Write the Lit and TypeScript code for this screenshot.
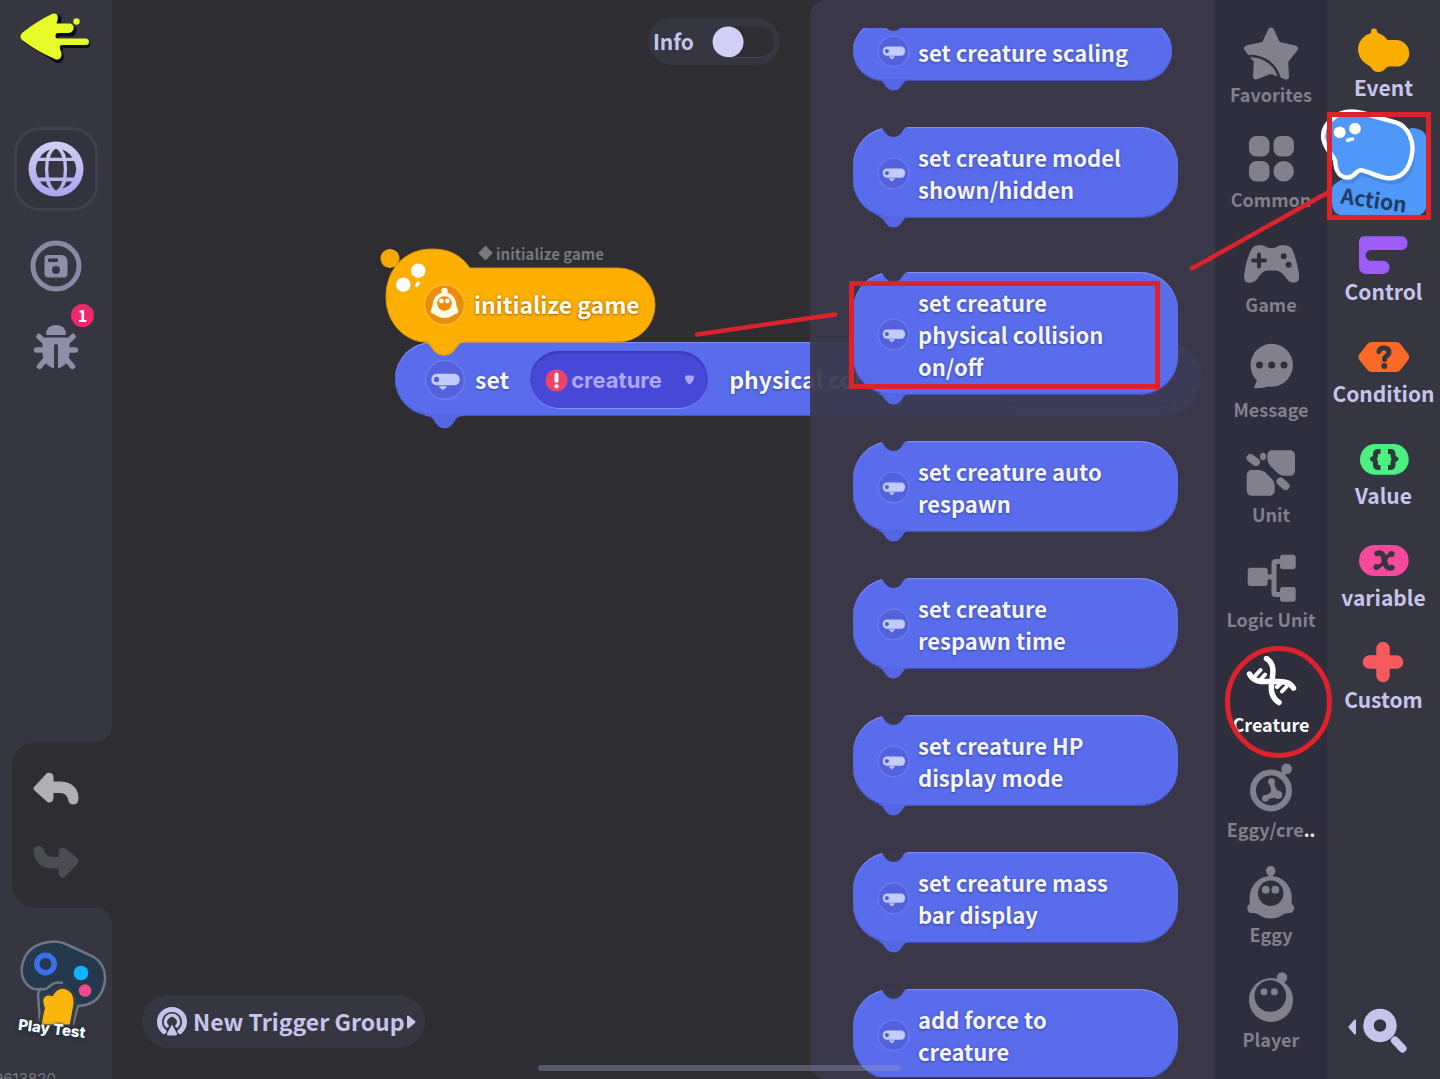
import { LitElement, html, svg, css } from "lit";
import { customElement, state } from "lit/decorators.js";
import { classMap } from "lit/directives/class-map.js";

const capsuleIcon = svg`
  <circle cx="20" cy="20" r="18.500" fill="#5362dc" stroke="#6c7bf0" stroke-width="1.500"/>
  <rect x="7" y="14" width="27" height="11" rx="5" fill="#c4ccff"/>
  <circle cx="12" cy="19.500" r="2.500" fill="#4f5ed0"/>
  <path d="M15 26.500h6l-3 2.500z" fill="#c4ccff" stroke="#c4ccff" stroke-linejoin="round"/>`;

const categories = [
  { label: "Favorites", icon: svg`
    <path d="M28 4.500 L34 17.500 Q35 19 37 19.200 L52 22.500 L43 34 Q42 35.500 42.200 37 L43 50.500 L30 45.500 Q28 45 26 45.500 L13 50.500 L13.800 37 Q14 35.500 13 34 L4 22.500 L19 19.200 Q21 19 22 17.500 Z" fill="currentColor" stroke="currentColor" stroke-width="6" stroke-linejoin="round"/>
    <path d="M6 30 C20 30 33 37 37 54" fill="none" stroke="#2f2e3d" stroke-width="2.500"/>` },
  { label: "Common", icon: svg`<g fill="currentColor">
    <rect x="6" y="5" width="20.500" height="20.500" rx="7.500"/><rect x="30.500" y="5" width="20.500" height="20.500" rx="7.500"/>
    <rect x="6" y="30" width="20.500" height="20.500" rx="7.500"/><circle cx="40.700" cy="40.300" r="10.300"/></g>` },
  { label: "Game", icon: svg`
    <path d="M14 9.500 Q19 8 24 11.200 Q28.500 13 33 11.200 Q38 8 43 9.500 Q48 10 50 15 Q54 25 56.300 39 Q57 46 51 46.800 Q47 47 44 43 Q39 35 33 34.500 H24 Q19 35 14 43 Q11 47 6 46.800 Q0 46 1.200 39 Q3 25 7.500 15 Q9.500 10 14 9.500 Z" fill="currentColor"/>
    <path d="M16 18.500v12 M10 24.500h12" stroke="#2f2e3d" stroke-width="4" stroke-linecap="round"/>
    <circle cx="40.700" cy="20.300" r="3" fill="#2f2e3d"/><circle cx="45.700" cy="28.700" r="3" fill="#2f2e3d"/>` },
  { label: "Message", icon: svg`
    <path d="M28.500 2.700 a21.500 21.500 0 1 1 -3 42.800 Q20 47.500 12.500 47.300 Q10.500 47 11.500 45 L14 39.500 A21.500 21.500 0 0 1 28.500 2.700 Z" fill="currentColor"/>
    <g fill="#2f2e3d"><circle cx="16.500" cy="24" r="3.500"/><circle cx="28.700" cy="24" r="3.500"/><circle cx="41" cy="24" r="3.500"/></g>` },
  { label: "Unit", icon: svg`
    <path d="M29 4.300 H47 a5 5 0 0 1 5 5 V25 a4.700 4.700 0 0 1-4.700 4.700 H41 Q37 29.700 34 26.500 L27 19.500 Q24.300 16.500 24.300 12 V9 a4.700 4.700 0 0 1 4.700-4.700Z M8.700 24 H16 Q20 24 22.500 26.500 L29 33 Q31.700 35.500 31.700 40 V44.700 a5 5 0 0 1-5 5 H8.700 a5 5 0 0 1-5-5 V29 a5 5 0 0 1 5-5Z" fill="currentColor"/>
    <path d="M7.500 12 L13 16 M37.500 35.500 L42.500 40" stroke="currentColor" stroke-width="8" stroke-linecap="round"/>
    <ellipse cx="20" cy="10.500" rx="3" ry="3.700" fill="currentColor"/>` },
  { label: "Logic Unit", icon: svg`
    <g fill="currentColor"><rect x="4.700" y="16.700" width="20" height="18.300" rx="3"/><rect x="37" y="3.700" width="15.700" height="14.500" rx="3"/><rect x="37" y="36" width="15.700" height="14.800" rx="3"/></g>
    <path d="M24 26h7 M38 10.500h-5q-2 0-2 2v29q0 2 2 2h5" fill="none" stroke="currentColor" stroke-width="5"/>` },
  { label: "Creature", icon: svg`<g fill="none" stroke="currentColor" stroke-linecap="round">
    <path d="M23.500 2.500 C32 8 30 17 29 25 C27.500 34 28 41 36 46.500 M6.500 18 C11 27 20 25.500 28 25.500 C37 25.500 46 24 50.500 32" stroke-width="5.500"/>
    <path d="M12 20 L17.500 14 M18 23 L22 18.500 M34 31 L38.500 26.500 M39 35.500 L44.500 29.500" stroke-width="4"/></g>` },
  { label: "Eggy/cre", more: "..", icon: svg`
    <circle cx="28" cy="29.500" r="18" fill="none" stroke="currentColor" stroke-width="6"/>
    <path d="M39 14 L43 9" stroke="currentColor" stroke-width="5"/><circle cx="43.700" cy="7.700" r="5.300" fill="currentColor"/>
    <path d="M28.700 21 Q29 27 34.500 34 Q29 34 22 37" fill="none" stroke="currentColor" stroke-width="5"/>
    <path d="M28.500 22 L34 33.500 L23 37 Q30 31 28.500 22Z" fill="currentColor"/>
    <g fill="currentColor"><circle cx="28.500" cy="20.700" r="3.400"/><circle cx="35" cy="33.800" r="4.200"/><circle cx="22.300" cy="37.300" r="3.400"/></g>` },
  { label: "Eggy", icon: svg`<g fill="currentColor">
    <circle cx="27.700" cy="4.900" r="4.800"/><path d="M25.500 7h4.500v6h-4.500z"/>
    <path d="M27.700 10 A21 21 0 0 1 48.700 31 V38 A4.800 4.800 0 0 1 46 47 Q43 47 41 48 Q28 57 14.500 48 Q12 46.800 9 47 A4.800 4.800 0 0 1 6.700 38 V31 A21 21 0 0 1 27.700 10Z"/></g>
    <circle cx="27.700" cy="27.300" r="12.700" fill="#2f2e3d"/><g fill="currentColor"><circle cx="22.700" cy="23.700" r="3.900"/><circle cx="32.300" cy="23.700" r="3.900"/></g>` },
  { label: "Player", icon: svg`
    <circle cx="28" cy="29" r="22" fill="currentColor"/><circle cx="39" cy="6.500" r="5.200" fill="currentColor"/>
    <circle cx="27.300" cy="25" r="15.800" fill="#2f2e3d"/><g fill="currentColor"><circle cx="21" cy="20.700" r="3.500"/><circle cx="31.300" cy="20.700" r="3.500"/></g>` },
];

const kinds = [
  { label: "Event", icon: svg`
    <path d="M33 5.500 Q33 2.500 36 2.500 Q39 2.500 39 5.500 L40 7 Q46 9 49.500 14 H58 a13.300 13.300 0 0 1 0 26.600 H51 Q48.500 40.800 47 43 Q45 46 40 46 Q35.500 46 33.500 42 Q32.500 40 29 38.500 A17 17 0 0 1 33 7Z" fill="#fbae02"/>` },
  { label: "Action", icon: svg`` },
  { label: "Control", icon: svg`
    <path d="M27 6.300 H64 a7 7 0 0 1 0 13.700 H33 a5.300 5.300 0 0 0 0 10.700 H45 a6.500 6.500 0 0 1 0 13.300 H28 a7 7 0 0 1-7-7 V12 Q21 6.300 27 6.300Z" fill="#9d5cf8"/>` },
  { label: "Condition", icon: svg`
    <path d="M34 10 H58 Q60.500 10 62.500 12 L70 22 Q72.500 25 70 28 L62.500 38 Q60.500 40 58 40 H34 Q31.500 40 29.500 38 L21.500 28 Q19 25 21.500 22 L29.500 12 Q31.500 10 34 10Z" fill="#fb6926"/>
    <path d="M41 19.500 Q41.500 16 46 16 Q51 16 51 20 Q51 22.500 48.500 24 Q46.500 25.300 46.500 27.500" fill="none" stroke="#363640" stroke-width="5" stroke-linecap="round"/><circle cx="46.300" cy="34" r="2.900" fill="#363640"/>` },
  { label: "Value", icon: svg`
    <rect x="22" y="10" width="48.700" height="30.700" rx="15.300" fill="#4df080"/>
    <path d="M42.500 17.500 h-2 q-3 0-3 2.500 v1.500 q0 2.500-3 3.500 q3 1 3 3.500 v2.500 q0 2.500 3 2.500 h2 M50 17.500 h2 q3 0 3 2.500 v1.500 q0 2.500 3 3.500 q-3 1-3 3.500 v2.500 q0 2.500-3 2.500 h-2" fill="none" stroke="#2d3a3a" stroke-width="5" stroke-linejoin="round"/>` },
  { label: "variable", icon: svg`
    <rect x="21" y="9" width="49.700" height="31" rx="15.500" fill="#f5499b"/>
    <path d="M39 17.500 C45 15.500 45.500 20 46.500 25 C47.500 30 49 33 54 31.500" fill="none" stroke="#363640" stroke-width="5.500" stroke-linecap="round"/>
    <path d="M53.500 17.500 C48 18 46 31 38.500 31.500" fill="none" stroke="#363640" stroke-width="3.500" stroke-linecap="round"/>
    <circle cx="53.500" cy="18" r="3" fill="#363640"/><circle cx="38.500" cy="31" r="3" fill="#363640"/>` },
  { label: "Custom", icon: svg`
    <path d="M45 10.500v27M31.500 24h27" stroke="#f65a5f" stroke-width="13.500" stroke-linecap="round"/>` },
];

const actions = [
  { text: "set creature scaling", short: true },
  { text: "set creature model shown/hidden" },
  { text: "set creature physical collision on/off", spaced: true },
  { text: "set creature auto respawn" },
  { text: "set creature respawn time" },
  { text: "set creature HP display mode" },
  { text: "set creature mass bar display" },
  { text: "add force to creature" },
];

@customElement("action-block")
class ActionBlock extends LitElement {
  static properties = { text: {}, short: { type: Boolean, reflect: true } };
  declare text: string;
  declare short: boolean;

  static styles = css`
    :host { display: block; }
    .block {
      position: relative; display: flex; align-items: center; gap: 8px; width: 100%; margin: 0; border: 0;
      padding: 14px 52px 13px 24px; border-radius: 38px; background: #596cec; color: #f4f6ff; text-align: left;
      font: 700 22px/32px "Noto Sans CJK SC", "Noto Sans", sans-serif; cursor: grab;
      box-shadow: inset 0 1px 1px #8590f2, inset 0 -1px 1px #4150b8;
    }
    :host([short]) .block { border-radius: 30px; padding-right: 24px; }
    .icon { flex: none; width: 33px; height: 33px; }
    .label { text-shadow: 0 1px 2px #3c489c, 0 0 2px #4653b0; }
    .notch, .tab { position: absolute; left: 26px; width: 30px; height: 12px; }
    .notch { top: 0; }
    .tab { top: calc(100% - 2px); }
  `;

  render() {
    return html`<button class="block">
      <svg class="notch" viewBox="0 0 30 12"><path d="M0 0 Q3 0 4 2.500 Q8 10 14.500 10 Q21 10 24.500 2.500 Q26 0 29 0Z" fill="#3a384a"/></svg>
      <svg class="icon" viewBox="0 0 40 40">${capsuleIcon}</svg>
      <span class="label">${this.text}</span>
      <svg class="tab" viewBox="0 0 30 12"><path d="M0 0 V1 Q3 1.500 4.500 4 Q8.500 11.500 14.500 11.500 Q20.500 11.500 24.500 4 Q26 1.500 29 1 V0Z" fill="#5466e4"/></svg>
    </button>`;
  }
}

@customElement("app-root")
class AppRoot extends LitElement {
  @state() category = "Creature";
  @state() kind = "Action";

  static styles = css`
    :host { display: block; font-family: "Noto Sans CJK SC", "Noto Sans", sans-serif; font-weight: 700; color: #c6c4ea; }
    * { box-sizing: border-box; }
    button { margin: 0; padding: 0; border: 0; background: none; color: inherit; font: inherit; cursor: pointer; }
    svg { display: block; }
    .page {
      position: relative; display: grid; grid-template-columns: 112px 1fr 405px 112px 113px; grid-template-rows: 100vh;
      background: #2d2d32; overflow: hidden;
    }

    .rail { grid-column: 1; grid-row: 1; display: flex; flex-direction: column; position: relative; z-index: 2; overflow: hidden; }
    .rail-top { flex: 1; display: flex; flex-direction: column; align-items: center; background: #363640; border-bottom-right-radius: 16px; padding-top: 12px; }
    .globe { width: 84px; height: 84px; margin-top: 62px; border: 3px solid #42414d; border-radius: 26px; background: #33333d; display: grid; place-items: center; }
    .save { margin-top: 29px; }
    .bug { position: relative; margin-top: 30px; padding: 0 8px; }
    .badge { position: absolute; top: -18px; right: -7px; width: 23px; height: 23px; border-radius: 50%; background: #f0286e; color: #fff; font-size: 16px; line-height: 22px; text-align: center; }
    .history { background: linear-gradient(to right, #363640 40px, transparent 40px); }
    .history-box { margin-left: 12px; height: 166px; padding: 20px 32px 20px 20px; display: flex; flex-direction: column; align-items: center; justify-content: space-between; background: #2d2d32; border-radius: 24px 0 0 24px; }
    .history-box svg { width: 48px; height: 54px; }
    .rail-bottom { height: 171px; padding-top: 30px; background: #363640; border-top-right-radius: 16px; overflow: hidden; }
    .play { display: flex; flex-direction: column; align-items: flex-start; padding-left: 18px; }
    .play-text { margin-top: -7px; font: 800 15px/20px Inter, sans-serif; color: #fff; transform: rotate(7deg); text-shadow: 0 0 3px #1f3448, 0 1px 4px #1f3448, 1px 2px 2px #1f3448; }
    .uid { display: block; margin: 30px 0 0 -6px; font: 400 15px/20px Inter, sans-serif; color: #77777f; }

    .canvas { grid-column: 2 / 4; grid-row: 1; position: relative; overflow: hidden; }
    .stack { position: absolute; left: 268px; top: 240px; }
    .note { display: flex; align-items: center; gap: 3px; height: 28px; margin-left: 98px; font-size: 15px; line-height: 20px; color: #77777d; }
    .event { position: relative; z-index: 1; display: flex; align-items: center; height: 74px; padding-left: 43px; gap: 8px; }
    .event-shape { position: absolute; left: 0; top: -28px; }
    .event-icon, .stmt-icon { position: relative; flex: none; }
    .event-text { position: relative; padding-bottom: 2px; font-size: 23px; line-height: 36px; color: #fffdf0; text-shadow: 0 1px 2px #b06a00, 0 0 3px #c87d00; }
    .stmt {
      position: relative; display: flex; align-items: center; width: 806px; height: 74px; margin-left: 15px; padding: 2px 16px 0 29px;
      border-radius: 37px; background: #596cec; color: #f4f6ff; font-size: 23px; line-height: 36px; white-space: nowrap;
      box-shadow: inset 0 1px 1px #8590f2, inset 0 -1px 1px #4150b8;
    }
    .word { padding-bottom: 2px; text-shadow: 0 1px 2px #3c489c, 0 0 2px #4653b0; }
    .stmt-icon { margin-right: 9px; }
    .stmt-tab { position: absolute; left: 30px; top: 72px; }
    .slot { position: relative; display: flex; align-items: center; width: 178px; height: 58px; margin: 0 21px; border-radius: 29px; background: #4748d8; box-shadow: inset 0 2px 2px #3937b0, inset 0 -1px 0 #8c90f4; }
    .slot select { width: 100%; height: 58px; margin: 0; padding: 0 28px 0 41px; border: 0; border-radius: 29px; background: none; color: #aaa8f8; font: 700 22px/28px Inter, sans-serif; appearance: none; }
    .slot svg { position: absolute; pointer-events: none; }
    .slot .warn { left: 15px; }
    .slot .caret { right: 13px; }
    .slot-end { margin: 0 0 0 auto; width: 192px; }

    .hud { grid-column: 2; grid-row: 1; position: relative; display: flex; flex-direction: column; justify-content: space-between; padding: 18px 30px 31px 30px; pointer-events: none; }
    .info { align-self: flex-end; display: flex; align-items: center; gap: 18px; height: 47px; padding: 0 5px; border-radius: 24px; background: #363640; font-size: 21px; line-height: 32px; pointer-events: auto; }
    .switch { appearance: none; width: 63px; height: 32px; margin: 0; padding: 0; border-radius: 16px; background: radial-gradient(circle at 16px 16px, #d2cff6 15px, transparent 16px), #2d2d32; box-shadow: inset 0 -1px 0 #44434f; }
    .group { align-self: flex-start; display: flex; align-items: center; gap: 5px; height: 53px; padding: 0 9px 0 14px; border-radius: 27px; background: #363640; font-size: 23px; line-height: 36px; white-space: nowrap; pointer-events: auto; }
    .group-name, .info-name { padding-bottom: 2px; }
    .chev { margin-left: -4px; }

    .palette { grid-column: 3; grid-row: 1; position: relative; padding: 28px 37px 2px 43px; background: rgba(59, 56, 75, 0.93); border-radius: 16px 0 0 16px; }
    .blocks { height: 100%; overflow: hidden; display: flex; flex-direction: column; gap: 46px; margin: 0; padding: 0; list-style: none; }
    .blocks li { flex: none; }
    .blocks .cut { margin-top: -7px; padding-right: 6px; }
    .blocks .spaced { margin-top: 8px; }

    .cats { grid-column: 4; grid-row: 1; position: relative; display: flex; flex-direction: column; align-items: center; gap: 25px; padding-top: 26px; background: #2f2e3d; overflow: hidden; }
    .cat { flex: none; display: flex; flex-direction: column; align-items: center; color: #81808c; font-size: 18px; line-height: 24px; white-space: nowrap; }
    .cat svg { width: 56px; height: 56px; }
    .cat.on, .more { color: #fff; }

    .kinds { grid-column: 5; grid-row: 1; position: relative; display: flex; flex-direction: column; align-items: center; gap: 30px; padding: 26px 0 20px; background: #363640; }
    .kind { flex: none; position: relative; display: flex; flex-direction: column; align-items: center; font-size: 21px; line-height: 22px; white-space: nowrap; }
    .kind .pic { width: 92px; height: 50px; }
    .kind.on .pic { visibility: hidden; }
    .kind.on { color: #1f3c63; }
    .active-tab { position: absolute; left: -19px; top: -23px; }
    .kind.on .name { position: relative; transform: translate(-9px, 10px) rotate(8deg); }
    .search { margin-top: auto; }

    .home { position: absolute; left: 50%; bottom: 8px; width: 363px; height: 6px; margin-left: -182px; border-radius: 3px; background: rgba(150, 150, 190, 0.4); }
    .marks { position: absolute; left: 0; top: 0; pointer-events: none; }
  `;

  render() {
    return html`<div class="page">
      <main class="canvas">
        <div class="stack">
          <div class="note"><svg width="15" height="16" viewBox="0 0 15 16"><path d="M7.500 1 L13.500 7 L7.500 13 L1.500 7Z" fill="#77777d" stroke="#77777d" stroke-width="2" stroke-linejoin="round"/></svg>initialize game</div>
          <div class="event">
            <svg class="event-shape" width="280" height="120" viewBox="0 0 280 120">
              <circle cx="10" cy="18.500" r="9.500" fill="#f7a800"/>
              <path d="M90 28 C80 14 68 9 52 9 C24 9 6 30 6 57 C6 84 26 101 44 102 q4 0 6.500 4 l4 5.500 q9.500 8 19 0 l4-5.500 q2.500-4 7-4 H238 A37 37 0 0 0 238 28 H96 Q92 28 90 28Z" fill="#fcae01" stroke="#d98f0c" stroke-width="1"/>
              <circle cx="38.300" cy="30.700" r="7.200" fill="#fff"/><circle cx="23.300" cy="44.700" r="7.200" fill="#fff"/>
              <path d="M36.500 45.500 l2-2.500" stroke="#fff" stroke-width="3.500" stroke-linecap="round"/>
            </svg>
            <svg class="event-icon" width="43" height="43" viewBox="0 0 43 43">
              <circle cx="21.500" cy="20.800" r="20" fill="#e98e0b" stroke="#ffb92b" stroke-width="1.500"/>
              <g fill="#fffbe8"><circle cx="21.500" cy="7" r="3.200"/><path d="M21.500 8.500 Q32.500 9 33.500 22 L35 25.500 Q36.500 29.500 32 30 L30 31.500 Q21.500 36.500 13 31.500 L11 30 Q6.500 29.500 8 25.500 L9.500 22 Q10.500 9 21.500 8.500Z"/></g>
              <circle cx="21.500" cy="19.500" r="7.300" fill="#e98e0b"/><circle cx="18.500" cy="17" r="2.400" fill="#fffbe8"/><circle cx="24.500" cy="17" r="2.400" fill="#fffbe8"/>
            </svg>
            <span class="event-text">initialize game</span>
          </div>
          <div class="stmt">
            <svg class="stmt-icon" width="42" height="42" viewBox="0 0 40 40">${capsuleIcon}</svg>
            <span class="word">set</span>
            <span class="slot">
              <select aria-label="Target"><option>creature</option></select>
              <svg class="warn" width="23" height="23" viewBox="0 0 23 23"><circle cx="11.500" cy="11.500" r="11" fill="#ef4269"/><path d="M11.500 5.500v6.500" stroke="#fff" stroke-width="4" stroke-linecap="round"/><circle cx="11.500" cy="17.300" r="2.100" fill="#fff"/></svg>
              <svg class="caret" width="11" height="12" viewBox="0 0 11 12"><path d="M2.500 1.500h6q1.500 0 1.500 2-.5 4-4.500 7-4-3-4.500-7 0-2 1.500-2Z" fill="#aaa8f8"/></svg>
            </span>
            <span class="word">physical collision</span>
            <span class="slot slot-end"></span>
            <svg class="stmt-tab" width="40" height="16" viewBox="0 0 40 16"><path d="M0 0 V2 Q6 2 8 5 Q13 14.500 19.500 14.500 Q26 14.500 31 5 Q33 2 39 2 V0Z" fill="#5466e4"/></svg>
          </div>
        </div>
      </main>

      <nav class="rail" aria-label="Tools">
        <div class="rail-top">
          <button aria-label="Back"><svg width="72" height="53" viewBox="0 0 72 53">
            <g transform="translate(2 2)" fill="#0d0d10" stroke="#0d0d10"><path d="M2 22 L34 2 Q40 1 38 8 L37 12 H50 Q55 14 53 18 Q52 22 48 21.500 H36 Q34 24 36 27 H66 Q69 30 66 33 H41 L39 36 Q44 48 35 48 L3 28 Q-1 25 2 22Z" stroke-width="2"/></g>
            <path d="M2 21 Q17 9 33 1.500 Q39 1 37.500 8 L36.500 11.500 H50 Q54.500 12.500 53.500 17 Q52 21 48 21 H38 Q35.500 21 35.500 24 Q35.500 26.500 38 26.500 H66 Q69 27 69 30 Q69 33 66 33 H42 Q39 33 40 37 L41.500 41 Q42 48 36 47.500 Q18 40 2 28 Q-1 24.500 2 21Z" fill="#e6fb28"/>
            <circle cx="56.500" cy="9.500" r="3.200" fill="#e6fb28"/></svg></button>
          <button class="globe" aria-label="World"><svg width="58" height="58" viewBox="0 0 58 58">
            <defs><linearGradient id="g" x1="0" y1="0" x2="0" y2="1"><stop offset="0" stop-color="#d2cff4"/><stop offset="1" stop-color="#a9a6f0"/></linearGradient></defs>
            <circle cx="29" cy="29" r="27.500" fill="url(#g)"/>
            <g fill="#363541" transform="translate(1.500 1.500) scale(.95)"><path d="M22.500 8.500 Q19 13 18.500 17 H12 Q15 11.500 22.500 8.500Z M35.500 8.500 Q43 11.500 46 17 H39.500 Q39 13 35.500 8.500Z M22.500 49.500 Q19 46 18.500 42 H12 Q15 47 22.500 49.500Z M35.500 49.500 Q43 47 46 42 H39.500 Q39 46 35.500 49.500Z"/>
            <path d="M10 20.500 H18 Q16.500 29 18 38 H10 Q5.500 29 10 20.500Z M48 20.500 H40 Q41.500 29 40 38 H48 Q52.500 29 48 20.500Z M21.500 20.500 H36.500 Q38 29 36.500 38 H21.500 Q20 29 21.500 20.500Z M22.500 17 Q25 8.500 29 7.500 Q33 8.500 35.500 17Z M22.500 41.500 Q25 50 29 51.500 Q33 50 35.500 41.500Z"/></g></svg></button>
          <button class="save" aria-label="Save"><svg width="52" height="52" viewBox="0 0 52 52"><circle cx="26" cy="26" r="23" fill="none" stroke="#8a88a4" stroke-width="5"/>
            <path d="M18 15 H32 Q37 16 37.500 21 V34 Q37 37.500 34 37.500 H18 Q14.500 37 14.500 34 V18 Q15 15 18 15Z" fill="#8f8da8"/><rect x="18" y="18.500" width="10" height="3.500" rx="1" fill="#363640"/><circle cx="26" cy="30" r="4" fill="#363640"/></svg></button>
          <button class="bug" aria-label="Debug"><svg width="46" height="50" viewBox="0 0 46 50"><g fill="#8f8da8"><path d="M13 13 Q13 3 23 3 Q33 3 33 13Z"/><path d="M12 15.500 H34 Q36.500 16 36.500 19 V31 Q36 44 23 47 Q10 44 9.500 31 V19 Q9.500 16 12 15.500Z"/></g>
            <path d="M12 20 L6 14.500 M34 20 L40 14.500 M10 28 H3.500 M36 28 H42.500 M12 38 L6.500 44.500 M34 38 L39.500 44.500" stroke="#8f8da8" stroke-width="5.500" stroke-linecap="round"/><path d="M23 24v22" stroke="#363640" stroke-width="4" stroke-linecap="round"/></svg><span class="badge">1</span></button>
        </div>
        <div class="history"><div class="history-box">
          <button aria-label="Undo"><svg viewBox="0 0 48 54"><path d="M3 24 L15 11 Q21 10 21.500 15 V19.500 H29 Q46 21 46.500 36 Q46.500 43 41 42.500 Q36.500 42 36 37 Q34.500 31 28 31 H21.500 V36 Q21 41 16 40.500 L3 29 Q0 26.500 3 24Z" fill="#b0b0b2"/></svg></button>
          <button aria-label="Redo"><svg viewBox="0 0 48 54"><path d="M45 24 L33 14 Q27 13 26.500 18 V23 H20 Q14 23 12 16 Q10 11.500 5.500 12 Q1 13 1.500 18 Q4 34 20 34.500 H26.500 V39 Q27 44 32 43.500 L45 31 Q48 27 45 24Z" fill="#4b4b54"/></svg></button>
        </div></div>
        <div class="rail-bottom">
          <button class="play"><svg width="90" height="88" viewBox="0 0 90 88">
            <path d="M31 4 Q40 2 50 7 L76 19 Q88 27 87 42 Q84 67 60 68 L55 86 L22 84 L20 56 L22 51 Q16 52 12 49 Q2 42 4 28 Q8 7 31 4Z" fill="#24394d" stroke="#6f7680" stroke-width="2.500"/>
            <path d="M22 51 Q26 53 32 48 Q37 43 45 45" fill="none" stroke="#6f7680" stroke-width="2.500"/>
            <circle cx="27.500" cy="26" r="8.700" fill="none" stroke="#3a71e6" stroke-width="5.500"/><circle cx="63" cy="35" r="7.300" fill="#10b4fb"/><circle cx="67" cy="52.500" r="6.300" fill="#f24a8e"/>
            <path d="M25.500 70 Q21 60 28 56.500 Q31 55.500 34 56.500 Q39 48 47 49.500 Q57.500 52 57 66 L53 88 H22 Q23 80 25.500 70Z" fill="#fbb60d" stroke="#363c48" stroke-width="3"/></svg>
            <span class="play-text">Play Test</span></button>
          <span class="uid">9613820</span>
        </div>
      </nav>

      <div class="hud">
        <label class="info"><span class="info-name">Info</span><input class="switch" type="checkbox" role="switch"></label>
        <button class="group"><svg width="32" height="32" viewBox="0 0 32 32"><g fill="none" stroke="#c6c4ea" stroke-linecap="round"><path d="M8 25.500 A12.500 12.500 0 1 1 24 25.500" stroke-width="5"/><path d="M11 20 A6.500 6.500 0 1 1 21 20" stroke-width="3.500"/></g><path d="M16 18.500 L21 27.500 Q21.500 29.500 19.500 29.500 H12.500 Q10.500 29.500 11 27.500Z" fill="#c6c4ea"/></svg><span class="group-name">New Trigger Group</span><svg class="chev" width="10" height="16" viewBox="0 0 10 16"><path d="M2 2.500v11L8.500 8Z" fill="#c6c4ea" stroke="#c6c4ea" stroke-linejoin="round" stroke-width="2"/></svg></button>
      </div>

      <section class="palette" aria-label="Blocks"><ul class="blocks">
        ${actions.map((a) => html`<li class=${classMap({ cut: !!a.short, spaced: !!a.spaced })}><action-block .text=${a.text} ?short=${!!a.short}></action-block></li>`)}
      </ul></section>

      <nav class="cats" aria-label="Categories">
        ${categories.map((c) => html`<button class=${classMap({ cat: true, on: c.label === this.category })} @click=${() => (this.category = c.label)}>
          <svg viewBox="0 0 56 56">${c.icon}</svg><span>${c.label}${c.more ? html`<span class="more">${c.more}</span>` : ""}</span></button>`)}
      </nav>

      <nav class="kinds" aria-label="Block kinds">
        ${kinds.map((k) => {
          const on = k.label === this.kind;
          return html`<button class=${classMap({ kind: true, on })} @click=${() => (this.kind = k.label)}>
            ${on ? html`<svg class="active-tab" width="112" height="116" viewBox="0 0 112 116">
              <path d="M13 83 Q14 79 22 75 L92 23 Q108 23 108 37 V97 Q108 111 94 111 H27 Q13 111 13 97Z" fill="#4f97f8"/>
              <path d="M13 13 C22 4 36 4 50 9 L78 17 C90 21 96 36 94 48 C92 66 82 75 68 73.500 C58 72 50 67 42 65.500 C37 65 36 72 29 73 C19 73 16 66 15.500 56 C15 52 6 46 3.500 34 C2 25 6 18 13 13Z" fill="#3568b8" opacity=".3" transform="translate(2 6)"/>
              <path d="M13 13 C22 4 36 4 50 9 L78 17 C90 21 96 36 94 48 C92 66 82 75 68 73.500 C58 72 50 67 42 65.500 C37 65 36 72 29 73 C19 73 16 66 15.500 56 C15 52 6 46 3.500 34 C2 25 6 18 13 13Z" fill="#4f97f8" stroke="#fff" stroke-width="4.500" transform="translate(1 1) scale(.98)"/>
              <circle cx="20.700" cy="27.300" r="5.900" fill="#fff"/><circle cx="36" cy="23.700" r="5.900" fill="#fff"/><path d="M28.500 35.200 L33.500 34" stroke="#fff" stroke-width="3.500" stroke-linecap="round"/></svg>` : ""}
            <svg class="pic" viewBox="0 0 92 50">${k.icon}</svg><span class="name">${k.label}</span></button>`;
        })}
        <button class="search" aria-label="Search"><svg width="80" height="58" viewBox="0 0 80 58"><path d="M11 19.500v13L5.500 26Z" fill="#c6c4ea" stroke="#c6c4ea" stroke-width="2" stroke-linejoin="round"/><circle cx="36" cy="24.500" r="11.500" fill="none" stroke="#c6c4ea" stroke-width="10.500"/><path d="M51 39.500 L58.500 47.500" stroke="#c6c4ea" stroke-width="8" stroke-linecap="round"/></svg></button>
      </nav>

      <div class="home"></div>
      <svg class="marks" width="1440" height="1079" viewBox="0 0 1440 1079" fill="none" stroke="#dd222c" stroke-width="5">
        <rect x="851.500" y="283.500" width="306" height="103"/><rect x="1329.500" y="114.500" width="99" height="103"/>
        <ellipse cx="1278.500" cy="702" rx="51" ry="53.500"/>
        <path d="M697 334.500 L835 314.500 M1192 268.500 L1328 192.500" stroke-linecap="round" stroke-width="4.500"/>
      </svg>
    </div>`;
  }
}
